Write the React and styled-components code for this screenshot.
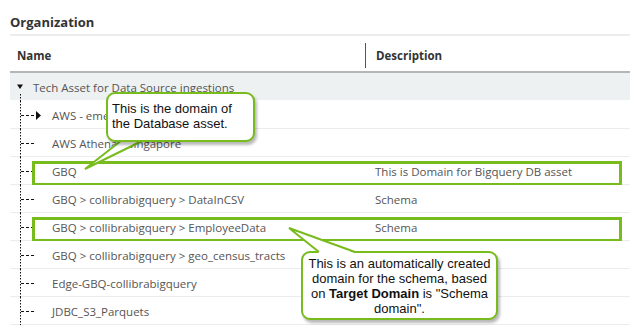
import React from "react";
import styled, { createGlobalStyle } from "styled-components";

const GlobalStyle = createGlobalStyle`
  html, body {
    margin: 0;
    padding: 0;
    background: #fff;
  }
  body {
    font-family: "Open Sans", "Liberation Sans", sans-serif;
    width: 630px;
    height: 330px;
    overflow: hidden;
  }
`;

const GREEN = "#78bb1c";

const Page = styled.div`
  position: relative;
  width: 630px;
  height: 330px;
  overflow: hidden;
  padding-left: 10px;
  box-sizing: border-box;
`;

const Title = styled.h2`
  margin: 0;
  height: 36px;
  padding-top: 13px;
  box-sizing: border-box;
  font-size: 13px;
  font-weight: 700;
  color: #333;
  border-bottom: 2px solid #ececec;
  line-height: 18px;
`;

const HeaderRow = styled.div`
  display: grid;
  grid-template-columns: 355px 1fr;
  height: 32px;
  padding-top: 3px;
  box-sizing: content-box;
  align-items: center;
  border-bottom: 2px solid #b3b5b6;
  font-size: 11.5px;
  font-weight: 700;
  color: #333;
`;

const HeaderCell = styled.div`
  padding-left: ${(p) => (p.$divider ? "10px" : "7px")};
  border-left: ${(p) => (p.$divider ? "1px solid #555" : "none")};
  height: ${(p) => (p.$divider ? "25px" : "auto")};
  display: flex;
  align-items: center;
`;

const Row = styled.div`
  position: relative;
  display: grid;
  grid-template-columns: 355px 1fr;
  height: 28px;
  align-items: center;
  background: ${(p) => (p.$shaded ? "#edf1f2" : "#fff")};
  border-bottom: 1px solid ${(p) => (p.$shaded ? "#fff" : "#ececec")};
  box-sizing: border-box;
  font-size: 11.5px;
  color: #555;

  ${(p) =>
    p.$highlight &&
    `
    &::after {
      content: "";
      position: absolute;
      left: 22px;
      right: 8px;
      top: 4px;
      bottom: -2px;
      border: 3px solid ${GREEN};
      pointer-events: none;
    }
  `}
`;

const NameCell = styled.div`
  display: flex;
  align-items: center;
  height: 100%;
  white-space: nowrap;
`;

const DescCell = styled.div`
  padding-left: 10px;
  white-space: nowrap;
`;

const Tree = styled.svg`
  flex: none;
  display: block;
`;

const Callout = styled.div`
  position: absolute;
  left: ${(p) => p.$x}px;
  top: ${(p) => p.$y}px;
  width: ${(p) => p.$w}px;
  height: ${(p) => p.$h}px;
  box-sizing: border-box;
  background: #fff;
  border: 2px solid ${GREEN};
  border-radius: 9px;
  box-shadow: 2px 3px 3px rgba(0, 0, 0, 0.28);
  font-family: "Liberation Sans", Arial, sans-serif;
  font-size: 13px;
  line-height: 15px;
  color: #111;
  padding: ${(p) => p.$pad};
  text-align: ${(p) => p.$align || "left"};
`;

const Tail = styled.svg`
  position: absolute;
  left: 0;
  top: 0;
  overflow: visible;
  pointer-events: none;
  z-index: ${(p) => p.$z || 0};
`;

const rows = [
  { name: "AWS - eme", caret: true },
  { name: "AWS Athena - Singapore" },
  { name: "GBQ", desc: "This is Domain for Bigquery DB asset", hl: true },
  { name: "GBQ > collibrabigquery > DataInCSV", desc: "Schema" },
  { name: "GBQ > collibrabigquery > EmployeeData", desc: "Schema", hl: true },
  { name: "GBQ > collibrabigquery > geo_census_tracts" },
  { name: "Edge-GBQ-collibrabigquery" },
  { name: "JDBC_S3_Parquets" },
];

function Branch({ caret }) {
  return (
    <Tree width="42" height="28" viewBox="0 0 42 28">
      <line x1="10.5" y1="0" x2="10.5" y2="28" stroke="#111" strokeWidth="1" strokeDasharray="1.5 1.5" />
      <line x1="11" y1="14.5" x2="25" y2="14.5" stroke="#111" strokeWidth="1" strokeDasharray="3 2" />
      {caret && <polygon points="26,10 31,14.5 26,19" fill="#111" />}
    </Tree>
  );
}

function Root() {
  return (
    <Tree width="23" height="28" viewBox="0 0 23 28">
      <polygon points="7,11.5 13,11.5 10,16" fill="#111" />
      <line x1="10.5" y1="21" x2="10.5" y2="28" stroke="#111" strokeWidth="1" strokeDasharray="1.5 1.5" />
    </Tree>
  );
}

export default function App() {
  return (
    <>
      <GlobalStyle />
      <Page>
        <Title>Organization</Title>
        <HeaderRow>
          <HeaderCell>Name</HeaderCell>
          <HeaderCell $divider>Description</HeaderCell>
        </HeaderRow>
        <Row $shaded>
          <NameCell>
            <Root />
            Tech Asset for Data Source ingestions
          </NameCell>
          <DescCell />
        </Row>
        {rows.map((r) => (
          <Row key={r.name} $highlight={r.hl}>
            <NameCell>
              <Branch caret={r.caret} />
              {r.name}
            </NameCell>
            <DescCell>{r.desc}</DescCell>
          </Row>
        ))}

        <Tail width="630" height="330">
          <polygon points="122,139 144,139 85,169" fill="#fff" />
          <polyline points="122,140 85,169 144,140" fill="none" stroke={GREEN} strokeWidth="2" />
        </Tail>
        <Callout $x={106} $y={92} $w={149} $h={50} $pad="7px 4px">
          This is the domain of
          <br />
          the Database asset.
        </Callout>
        <Tail width="630" height="330" $z={2}>
          <polygon points="319,253 355,253 289,228" fill="#fff" />
          <polyline points="319,252 289,228 355,252" fill="none" stroke={GREEN} strokeWidth="2" />
        </Tail>
        <Callout $x={301} $y={251} $w={197} $h={69} $pad="3px 2px" $align="center">
          This is an automatically created domain for the schema, based on <b>Target Domain</b> is "Schema
          domain".
        </Callout>
      </Page>
    </>
  );
}
